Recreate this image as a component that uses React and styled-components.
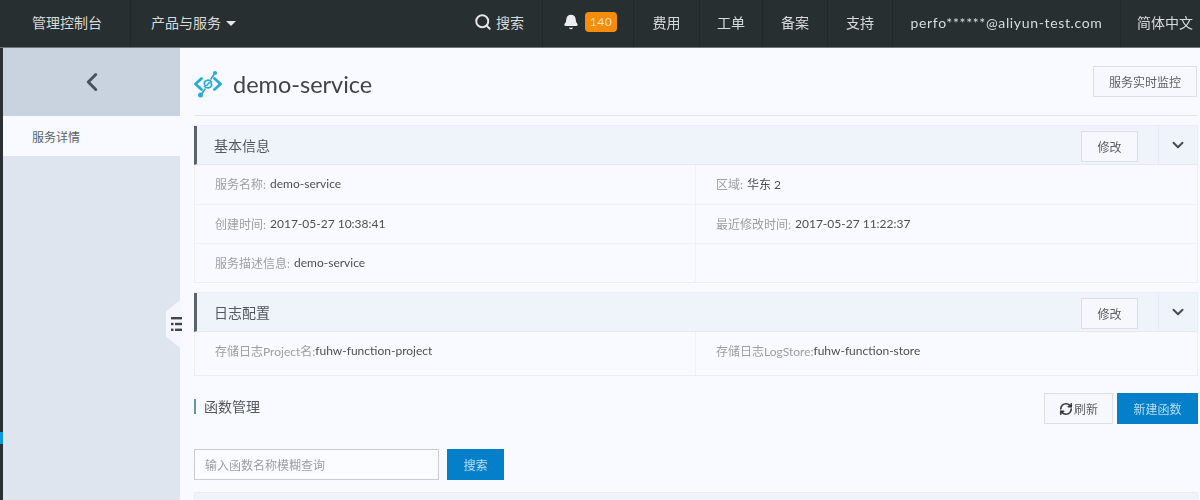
import React from "react";
import styled, { createGlobalStyle } from "styled-components";
import { Search, Bell, ChevronLeft, ChevronDown, RefreshCw } from "lucide-react";

const GlobalStyle = createGlobalStyle`
  html, body {
    margin: 0;
    padding: 0;
    height: 500px;
    overflow: hidden;
    background: #f8faff;
    font-family: Lato, "Noto Sans CJK SC", sans-serif;
  }
  * { box-sizing: border-box; }
`;

const Page = styled.div`
  width: 1200px;
  height: 500px;
  overflow: hidden;
  display: flex;
  flex-direction: column;
  filter: blur(0.4px);
`;

// Top bar
const TopBar = styled.header`
  height: 48px;
  flex: none;
  display: flex;
  align-items: stretch;
  background: #282f30;
  border-bottom: 1px solid #70767a;
  color: #d8dbdc;
  font-size: 14px;
`;

const NavCell = styled.div`
  width: ${(p) => (p.$w ? `${p.$w}px` : "auto")};
  display: flex;
  align-items: center;
  justify-content: ${(p) => (p.$center ? "center" : "flex-start")};
  gap: ${(p) => p.$gap || 0}px;
  padding: 0 ${(p) => p.$pr ?? 0}px 3px ${(p) => p.$pl ?? 0}px;
  border-left: ${(p) => (p.$plain ? "none" : "1px solid #22282a")};
  margin-left: ${(p) => (p.$push ? "auto" : 0)};
  white-space: nowrap;
`;

const Caret = styled.span`
  width: 0;
  height: 0;
  margin-top: 2px;
  border-left: 5px solid transparent;
  border-right: 5px solid transparent;
  border-top: 5px solid #e4e6e7;
`;

const Badge = styled.span`
  width: 32px;
  height: 20px;
  line-height: 20px;
  text-align: center;
  border-radius: 4px;
  background: #f58d0a;
  color: #fbe3bd;
  font-size: 12px;
  letter-spacing: 0.5px;
`;

const Email = styled.span`
  font-size: 14px;
  letter-spacing: 0.65px;
`;

// Body
const Body = styled.div`
  flex: 1;
  display: flex;
  min-height: 0;
`;

const EdgeStrip = styled.div`
  width: 3px;
  flex: none;
  display: flex;
  flex-direction: column;
  background: #2a3033;
`;

const EdgeMark = styled.div`
  height: 12px;
  margin-top: 384px;
  background: #0f9ae0;
`;

const Sidebar = styled.aside`
  width: 177px;
  flex: none;
  background: #dfe5ef;
  display: flex;
  flex-direction: column;
`;

const BackBox = styled.div`
  height: 68px;
  display: flex;
  align-items: center;
  justify-content: center;
  background: #c9d2df;
  color: #46535f;
`;

const SideItem = styled.div`
  height: 40px;
  display: flex;
  align-items: center;
  padding: 1px 0 0 29px;
  background: #f8faff;
  color: #5c6266;
  font-size: 12px;
`;

const Main = styled.main`
  flex: 1;
  position: relative;
  padding: 0 2px 0 14px;
  background: #f8faff;
  min-width: 0;
`;

const ToggleTab = styled.div`
  position: absolute;
  left: -14px;
  top: 252px;
  width: 16px;
  height: 48px;
  display: flex;
  align-items: center;
  justify-content: flex-end;
  background: #f4f7fd;
  clip-path: polygon(88% 0, 100% 0, 100% 100%, 88% 100%, 0 76%, 0 24%);
`;

const TitleRow = styled.div`
  height: 68px;
  display: flex;
  align-items: center;
  justify-content: space-between;
  border-bottom: 1px solid #e3e4ee;
  padding-right: 1px;
`;

const TitleLeft = styled.div`
  display: flex;
  align-items: center;
  gap: 11px;
  margin-top: 4px;
`;

const Title = styled.h1`
  margin: 0;
  font-size: 23.5px;
  font-weight: 400;
  color: #3f4448;
`;

const Button = styled.button`
  width: ${(p) => p.$w}px;
  height: ${(p) => p.$h || 31}px;
  padding: 0;
  display: flex;
  align-items: center;
  justify-content: center;
  gap: 1px;
  font-family: inherit;
  font-size: 12px;
  color: ${(p) => (p.$primary ? "#b9dcf2" : "#5a5f64")};
  background: ${(p) => (p.$primary ? "#0480cb" : "#f7f8fd")};
  border: 1px solid ${(p) => (p.$primary ? "#0480cb" : "#dcdfe8")};
`;

const EditButton = styled(Button)`
  margin-top: 3px;
`;

const Panel = styled.section`
  margin-top: ${(p) => p.$top}px;
  border: 1px solid #eaeef6;
  border-left: none;
`;

const PanelHead = styled.div`
  height: 39px;
  display: flex;
  align-items: center;
  background: #eff3fa;
  border-left: 3px solid #5d6469;
  border-bottom: 1px solid #e4e9f2;
`;

const PanelTitle = styled.div`
  flex: 1;
  padding-left: 17px;
  font-size: 14px;
  color: #53585c;
`;

const Collapse = styled.div`
  width: 39px;
  height: 100%;
  margin-left: 20px;
  display: flex;
  align-items: center;
  justify-content: center;
  color: #454c52;
  border-left: 1px solid #e6eaf2;
`;

const Row = styled.div`
  height: ${(p) => p.$h || 39}px;
  display: flex;
  border-left: 1px solid #eaeef6;
  border-top: ${(p) => (p.$first ? "none" : "1px solid #eef1f7")};
`;

const Cell = styled.div`
  width: ${(p) => (p.$left ? "501px" : "auto")};
  flex: ${(p) => (p.$left ? "none" : 1)};
  display: flex;
  align-items: center;
  padding-left: 20px;
  padding-bottom: ${(p) => p.$lift || 2}px;
  font-size: 12px;
  color: #9aa0a6;
  border-right: ${(p) => (p.$left ? "1px solid #eef1f7" : "none")};
`;

const Value = styled.span`
  color: #4c5155;
  margin-left: ${(p) => (p.$tight ? 0 : 4)}px;
`;

const SectionHead = styled.div`
  margin-top: 17px;
  height: 31px;
  display: flex;
  align-items: center;
  gap: 4px;
`;

const SectionTitle = styled.div`
  flex: 1;
  margin-bottom: 5px;
  padding-left: 8px;
  font-size: 14px;
  line-height: 15px;
  color: #53585c;
  border-left: 2px solid #6a93a8;
`;

const SearchRow = styled.div`
  margin-top: 25px;
  display: flex;
  gap: 8px;
`;

const SearchInput = styled.input`
  width: 245px;
  height: 31px;
  padding: 1px 10px 0;
  font-family: inherit;
  font-size: 12px;
  color: #5a5f64;
  background: #fbfcff;
  border: 1px solid #c9ccd6;
  outline: none;
  &::placeholder {
    color: #9a9fa6;
  }
`;

const TableTop = styled.div`
  margin-top: 12px;
  height: 30px;
  background: #eff3fa;
  border: 1px solid #e8ecf4;
`;

function Logo() {
  return (
    <svg width="28" height="30" viewBox="0 0 28 30" fill="none" stroke="#26aed6" strokeLinecap="round" strokeLinejoin="round">
      <path d="M7.5 9.5 L1.5 15 L7.5 20.5" strokeWidth="2.8" />
      <path d="M20.5 9.5 L26.5 15 L20.5 20.5" strokeWidth="2.8" />
      <path d="M8 24.5 L11 20 M17 10 L20 5.5" strokeWidth="1.6" stroke="#3a9cc4" />
      <path d="M17.5 12.5 C14 9.5 9.5 12 10.5 15.5 C11 17 13 17 14 15 C15 13 17 13 17.5 14.5 C18.5 18 14 20.5 10.5 17.5" strokeWidth="1.6" />
      <circle cx="21" cy="4" r="2.1" fill="#26aed6" stroke="none" />
      <circle cx="6.5" cy="26" r="2.5" fill="#26aed6" stroke="none" />
    </svg>
  );
}

function ListIcon() {
  return (
    <svg width="11" height="14" viewBox="0 0 11 14" fill="#3f464c">
      <rect x="0" y="0" width="11" height="2.4" />
      <rect x="0" y="5.8" width="2.5" height="2.4" />
      <rect x="4" y="5.8" width="7" height="2.4" />
      <rect x="0" y="11.6" width="2.5" height="2.4" />
      <rect x="4" y="11.6" width="7" height="2.4" />
    </svg>
  );
}

function InfoPanel({ title, top, children }) {
  return (
    <Panel $top={top}>
      <PanelHead>
        <PanelTitle>{title}</PanelTitle>
        <EditButton $w={57} $h={31}>修改</EditButton>
        <Collapse>
          <ChevronDown size={18} strokeWidth={2.6} />
        </Collapse>
      </PanelHead>
      {children}
    </Panel>
  );
}

export default function App() {
  return (
    <Page>
      <GlobalStyle />
      <TopBar>
        <NavCell $plain $w={130} $pl={32}>管理控制台</NavCell>
        <NavCell $gap={5} $pl={20}>
          产品与服务
          <Caret />
        </NavCell>
        <NavCell $push $plain $gap={4} $pl={18} $pr={18}>
          <Search size={18} strokeWidth={2.6} color="#e4e6e7" />
          搜索
        </NavCell>
        <NavCell $w={91} $center $gap={6} $pl={4}>
          <Bell size={16} fill="#eceeef" color="#eceeef" />
          <Badge>140</Badge>
        </NavCell>
        <NavCell $w={66} $center>费用</NavCell>
        <NavCell $w={63} $center>工单</NavCell>
        <NavCell $w={65} $center>备案</NavCell>
        <NavCell $w={65} $center>支持</NavCell>
        <NavCell $w={228} $center><Email>perfo******@aliyun-test.com</Email></NavCell>
        <NavCell $pl={16} $pr={7}>简体中文</NavCell>
      </TopBar>
      <Body>
        <EdgeStrip>
          <EdgeMark />
        </EdgeStrip>
        <Sidebar>
          <BackBox>
            <ChevronLeft size={30} strokeWidth={2.4} />
          </BackBox>
          <SideItem>服务详情</SideItem>
        </Sidebar>
        <Main>
          <ToggleTab>
            <ListIcon />
          </ToggleTab>
          <TitleRow>
            <TitleLeft>
              <Logo />
              <Title>demo-service</Title>
            </TitleLeft>
            <Button $w={104}>服务实时监控</Button>
          </TitleRow>
          <InfoPanel title="基本信息" top={9}>
            <Row $first>
              <Cell $left>服务名称: <Value>demo-service</Value></Cell>
              <Cell>区域: <Value>华东 2</Value></Cell>
            </Row>
            <Row>
              <Cell $left>创建时间: <Value>2017-05-27 10:38:41</Value></Cell>
              <Cell>最近修改时间: <Value>2017-05-27 11:22:37</Value></Cell>
            </Row>
            <Row>
              <Cell $left>服务描述信息: <Value>demo-service</Value></Cell>
              <Cell />
            </Row>
          </InfoPanel>
          <InfoPanel title="日志配置" top={9}>
            <Row $first $h={43}>
              <Cell $left $lift={6}>存储日志Project名:<Value $tight>fuhw-function-project</Value></Cell>
              <Cell $lift={6}>存储日志LogStore:<Value $tight>fuhw-function-store</Value></Cell>
            </Row>
          </InfoPanel>
          <SectionHead>
            <SectionTitle>函数管理</SectionTitle>
            <Button $w={69}>
              <RefreshCw size={14} strokeWidth={2.8} color="#33393e" />
              刷新
            </Button>
            <Button $w={81} $primary>新建函数</Button>
          </SectionHead>
          <SearchRow>
            <SearchInput placeholder="输入函数名称模糊查询" />
            <Button $w={57} $primary>搜索</Button>
          </SearchRow>
          <TableTop />
        </Main>
      </Body>
    </Page>
  );
}
